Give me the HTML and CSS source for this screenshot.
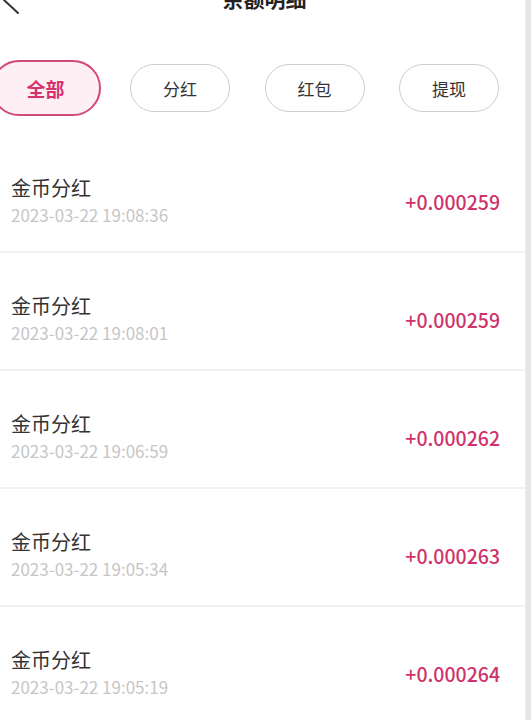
FILE: index.html
```html
<!DOCTYPE html>
<html lang="zh-CN">
<head>
<meta charset="utf-8">
<title>余额明细</title>
<link rel="stylesheet" href="styles.css">
</head>
<body>
<div class="page">
  <main class="main">
    <header class="header">
      <svg class="back" width="24" height="32" viewBox="0 0 24 32" aria-hidden="true">
        <polyline points="18,4 4,17 18,30" fill="none" stroke="#333" stroke-width="2" stroke-linecap="round" stroke-linejoin="round"/>
      </svg>
      <h1 class="title">余额明细</h1>
    </header>
    <nav class="tabs">
      <div class="tab active">全部</div>
      <div class="tab">分红</div>
      <div class="tab">红包</div>
      <div class="tab">提现</div>
    </nav>
    <ul class="list">
      <li class="row"><div class="info"><div class="name">金币分红</div><div class="time">2023-03-22 19:08:36</div></div><div class="amount">+0.000259</div></li>
      <li class="row"><div class="info"><div class="name">金币分红</div><div class="time">2023-03-22 19:08:01</div></div><div class="amount">+0.000259</div></li>
      <li class="row"><div class="info"><div class="name">金币分红</div><div class="time">2023-03-22 19:06:59</div></div><div class="amount">+0.000262</div></li>
      <li class="row"><div class="info"><div class="name">金币分红</div><div class="time">2023-03-22 19:05:34</div></div><div class="amount">+0.000263</div></li>
      <li class="row"><div class="info"><div class="name">金币分红</div><div class="time">2023-03-22 19:05:19</div></div><div class="amount">+0.000264</div></li>
    </ul>
  </main>
  <div class="scrollbar"></div>
</div>
</body>
</html>
```

FILE: styles.css
```css
* { box-sizing: border-box; }
html, body {
  margin: 0;
  padding: 0;
  background: #fff;
  font-family: "Noto Sans CJK SC", "Noto Sans", sans-serif;
  overflow: hidden;
}
.page {
  display: flex;
  width: 531px;
  height: 720px;
  overflow: hidden;
}
.main {
  flex: 1;
  min-width: 0;
  overflow: hidden;
}
.scrollbar {
  width: 6px;
  flex: none;
  background: #e6e6e6;
  border-left: 1px solid #ececec;
}
.header {
  position: relative;
  height: 30px;
  margin-top: -17px;
  display: flex;
  align-items: center;
  justify-content: center;
}
.back {
  position: absolute;
  left: 0;
  top: 0;
}
.title {
  margin: 0 0 0 4px;
  font-size: 21px;
  line-height: 30px;
  font-weight: 700;
  color: #222;
}
.tabs {
  display: flex;
  align-items: center;
  gap: 34.5px;
  height: 56px;
  margin-top: 47px;
  margin-left: -4.5px;
}
.tab {
  flex: none;
  width: 100px;
  height: 48px;
  border: 1px solid #cfcfcf;
  border-radius: 24px;
  display: flex;
  align-items: center;
  justify-content: center;
  font-size: 17px;
  color: #333;
  background: #fff;
}
.tab.active {
  width: 110px;
  height: 56px;
  margin: 0 -5px;
  border: 2px solid #d24878;
  border-radius: 28px;
  background: #fdeff4;
  color: #d6316b;
  font-size: 19px;
  font-weight: 700;
}
.list {
  list-style: none;
  margin: 0;
  padding: 0;
  margin-top: 19px;
}
.row {
  display: flex;
  align-items: center;
  justify-content: space-between;
  height: 118px;
  padding: 40px 25px 24px 11px;
  border-bottom: 2px solid #f2f2f2;
}
.name {
  font-size: 20px;
  line-height: 26px;
  color: #333;
}
.time {
  margin-top: 2px;
  font-size: 17px;
  line-height: 24px;
  color: #c6c6c6;
}
.amount {
  font-size: 19.5px;
  font-weight: 500;
  color: #d0336a;
}
```
